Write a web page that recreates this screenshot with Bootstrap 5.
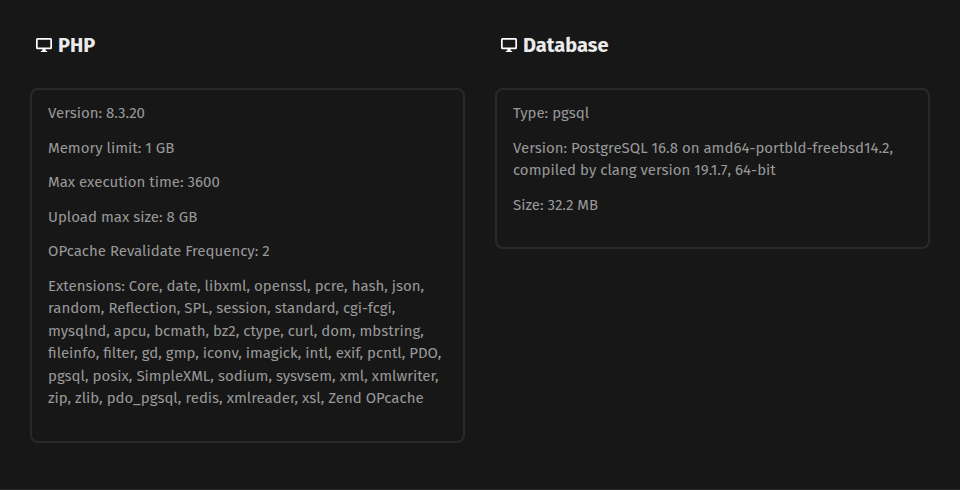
<!DOCTYPE html>
<html lang="en">
<head>
<meta charset="utf-8">
<meta name="viewport" content="width=device-width, initial-scale=1">
<title>System information</title>
<link href="https://cdn.jsdelivr.net/npm/bootstrap@5.3.0/dist/css/bootstrap.min.css" rel="stylesheet">
<style>
body {
  background: #171717;
  color: #999;
  font-family: "Fira Sans", Roboto, "Liberation Sans", sans-serif;
  font-size: 15px;
}
.system-info {
  padding: 30px 30px 46px;
  border-bottom: 1px solid #292929;
}
.info-columns { --bs-gutter-x: 30px; --bs-gutter-y: 30px; }
.section-title {
  color: #ebebeb;
  font-size: 20px;
  font-weight: 700;
  line-height: 30px;
  margin: 0 0 28px 6px;
  gap: 6px;
}
.info-box {
  border: 2px solid #292929;
  border-radius: 8px;
  padding: 12px 16px 19px;
}
.info-box p { margin-bottom: 12px; }
</style>
<script src="https://cdn.jsdelivr.net/npm/bootstrap@5.3.0/dist/js/bootstrap.bundle.min.js" defer></script>
</head>
<body>
<main class="system-info container-fluid min-vh-100">
  <div class="row info-columns row-cols-1 row-cols-md-2">
    <section class="col">
      <h2 class="section-title d-flex align-items-center">
        <svg width="16" height="16" viewBox="0 0 16 16" fill="#fff" aria-hidden="true"><path fill-rule="evenodd" d="M1.500 1h13A1.500 1.500 0 0 1 16 2.500v8.300a1.500 1.500 0 0 1-1.500 1.500H9.600v1.200l1.600.7V15H4.800v-.8l1.600-.7v-1.200H1.500A1.500 1.500 0 0 1 0 10.800V2.500A1.500 1.500 0 0 1 1.500 1zm.2 1.700v7.900h12.600V2.700z"/></svg>
        PHP
      </h2>
      <div class="info-box">
        <p>Version: 8.3.20</p>
        <p>Memory limit: 1 GB</p>
        <p>Max execution time: 3600</p>
        <p>Upload max size: 8 GB</p>
        <p>OPcache Revalidate Frequency: 2</p>
        <p>Extensions: Core, date, libxml, openssl, pcre, hash, json, random, Reflection, SPL, session, standard, cgi-fcgi, mysqlnd, apcu, bcmath, bz2, ctype, curl, dom, mbstring, fileinfo, filter, gd, gmp, iconv, imagick, intl, exif, pcntl, PDO, pgsql, posix, SimpleXML, sodium, sysvsem, xml, xmlwriter, zip, zlib, pdo_pgsql, redis, xmlreader, xsl, Zend OPcache</p>
      </div>
    </section>
    <section class="col">
      <h2 class="section-title d-flex align-items-center">
        <svg width="16" height="16" viewBox="0 0 16 16" fill="#fff" aria-hidden="true"><path fill-rule="evenodd" d="M1.500 1h13A1.500 1.500 0 0 1 16 2.500v8.300a1.500 1.500 0 0 1-1.500 1.500H9.600v1.200l1.600.7V15H4.800v-.8l1.600-.7v-1.200H1.500A1.500 1.500 0 0 1 0 10.800V2.500A1.500 1.500 0 0 1 1.500 1zm.2 1.700v7.900h12.600V2.700z"/></svg>
        Database
      </h2>
      <div class="info-box">
        <p>Type: pgsql</p>
        <p>Version: PostgreSQL 16.8 on amd64-portbld-freebsd14.2, compiled by clang version 19.1.7, 64-bit</p>
        <p>Size: 32.2 MB</p>
      </div>
    </section>
  </div>
</main>
</body>
</html>
